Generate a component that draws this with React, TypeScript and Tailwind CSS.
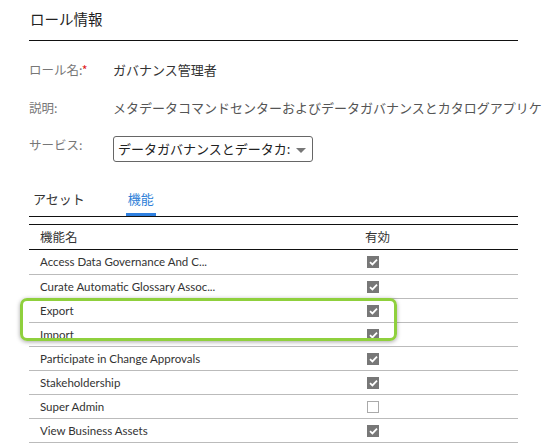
const rows = [
  { name: 'Access Data Governance And C...', on: true },
  { name: 'Curate Automatic Glossary Assoc...', on: true },
  { name: 'Export', on: true },
  { name: 'Import', on: true },
  { name: 'Participate in Change Approvals', on: true },
  { name: 'Stakeholdership', on: true },
  { name: 'Super Admin', on: false },
  { name: 'View Business Assets', on: true },
];

const jp = "font-['Noto_Sans_CJK_JP','Noto_Sans',sans-serif]";

function Check({ on }: { on: boolean }) {
  if (!on) {
    return <div className="ml-[2px] h-[12px] w-[12px] border border-[#aaaaaa] bg-white" />;
  }
  return (
    <div className="ml-[2px] flex h-[12px] w-[12px] items-center justify-center bg-[#777777]">
      <svg width="9" height="8" viewBox="0 0 9 8">
        <path d="M1 4.2 L3.4 6.4 L8 1.6" fill="none" stroke="#ffffff" strokeWidth="1.8" />
      </svg>
    </div>
  );
}

export default function App() {
  return (
    <div className={`relative h-[447px] w-[555px] overflow-hidden bg-white ${jp}`}>
      <div className="w-[518px] pl-[29px]">
        {/* Header */}
        <div className="flex h-[41px] items-center border-b border-[#111111] pb-[3px] pl-px text-[14.5px] text-[#222222]">
          ロール情報
        </div>

        {/* Form */}
        <div className="pt-[10px]">
          <div className="flex h-[38px] items-center">
            <div className="w-[84px] shrink-0 text-[12.5px] text-[#777777]">
              ロール名:<span className="text-[#e0201b]">*</span>
            </div>
            <div className="text-[13px] text-[#333333]">ガバナンス管理者</div>
          </div>
          <div className="flex h-[38px] items-center">
            <div className="w-[84px] shrink-0 text-[12.5px] text-[#777777]">説明:</div>
            <div className="whitespace-nowrap text-[13px] text-[#555555]">
              メタデータコマンドセンターおよびデータガバナンスとカタログアプリケ
            </div>
          </div>
          <div className="flex items-start">
            <div className="mt-[9px] w-[84px] shrink-0 text-[12.5px] leading-[18px] text-[#777777]">サービス:</div>
            <div className="mt-[9px] flex h-[26px] w-[200px] items-center rounded-[3px] border border-[#666666] pl-[4px] pr-[6px]">
              <div className="flex-1 overflow-hidden whitespace-nowrap text-[13px] text-[#222222]">
                データガバナンスとデータカ:
              </div>
              <svg width="10" height="6" viewBox="0 0 10 6" className="mt-[3px]">
                <path d="M0 0 L10 0 L5 5 Z" fill="#777777" />
              </svg>
            </div>
          </div>
        </div>

        {/* Tabs */}
        <div className="mt-[21px] flex border-b border-[#111111] text-[13px]">
          <div className="ml-[4px] h-[33px] pt-[7px] leading-[18px] text-[#333333]">アセット</div>
          <div className="ml-[41px] h-[33px] border-b-[3px] border-[#2f80e0] px-[2px] pt-[7px] leading-[18px] text-[#2f7fd8]">
            機能
          </div>
        </div>

        {/* Table */}
        <div className="mt-[7px]">
          <div className="grid h-[26px] grid-cols-[336px_1fr] items-center border-y border-[#111111] text-[12.5px] text-[#333333]">
            <div className="pl-[11px]">機能名</div>
            <div>有効</div>
          </div>
          {rows.map((r, i) => (
            <div
              key={r.name}
              className={`grid grid-cols-[336px_1fr] items-center border-b border-[#bbbbbb] font-['Lato',sans-serif] text-[11.5px] text-[#333333] ${
                i === 0 ? 'h-[25px]' : 'h-[24px]'
              }`}
            >
              <div className="pl-[11px]">{r.name}</div>
              <Check on={r.on} />
            </div>
          ))}
        </div>
      </div>

      {/* Highlight */}
      <div className="absolute left-[20px] top-[298px] h-[43px] w-[377px] rounded-[7px] border-[3px] border-[#8fd03d] shadow-[0_1px_4px_rgba(0,0,0,0.35)]" />
    </div>
  );
}
